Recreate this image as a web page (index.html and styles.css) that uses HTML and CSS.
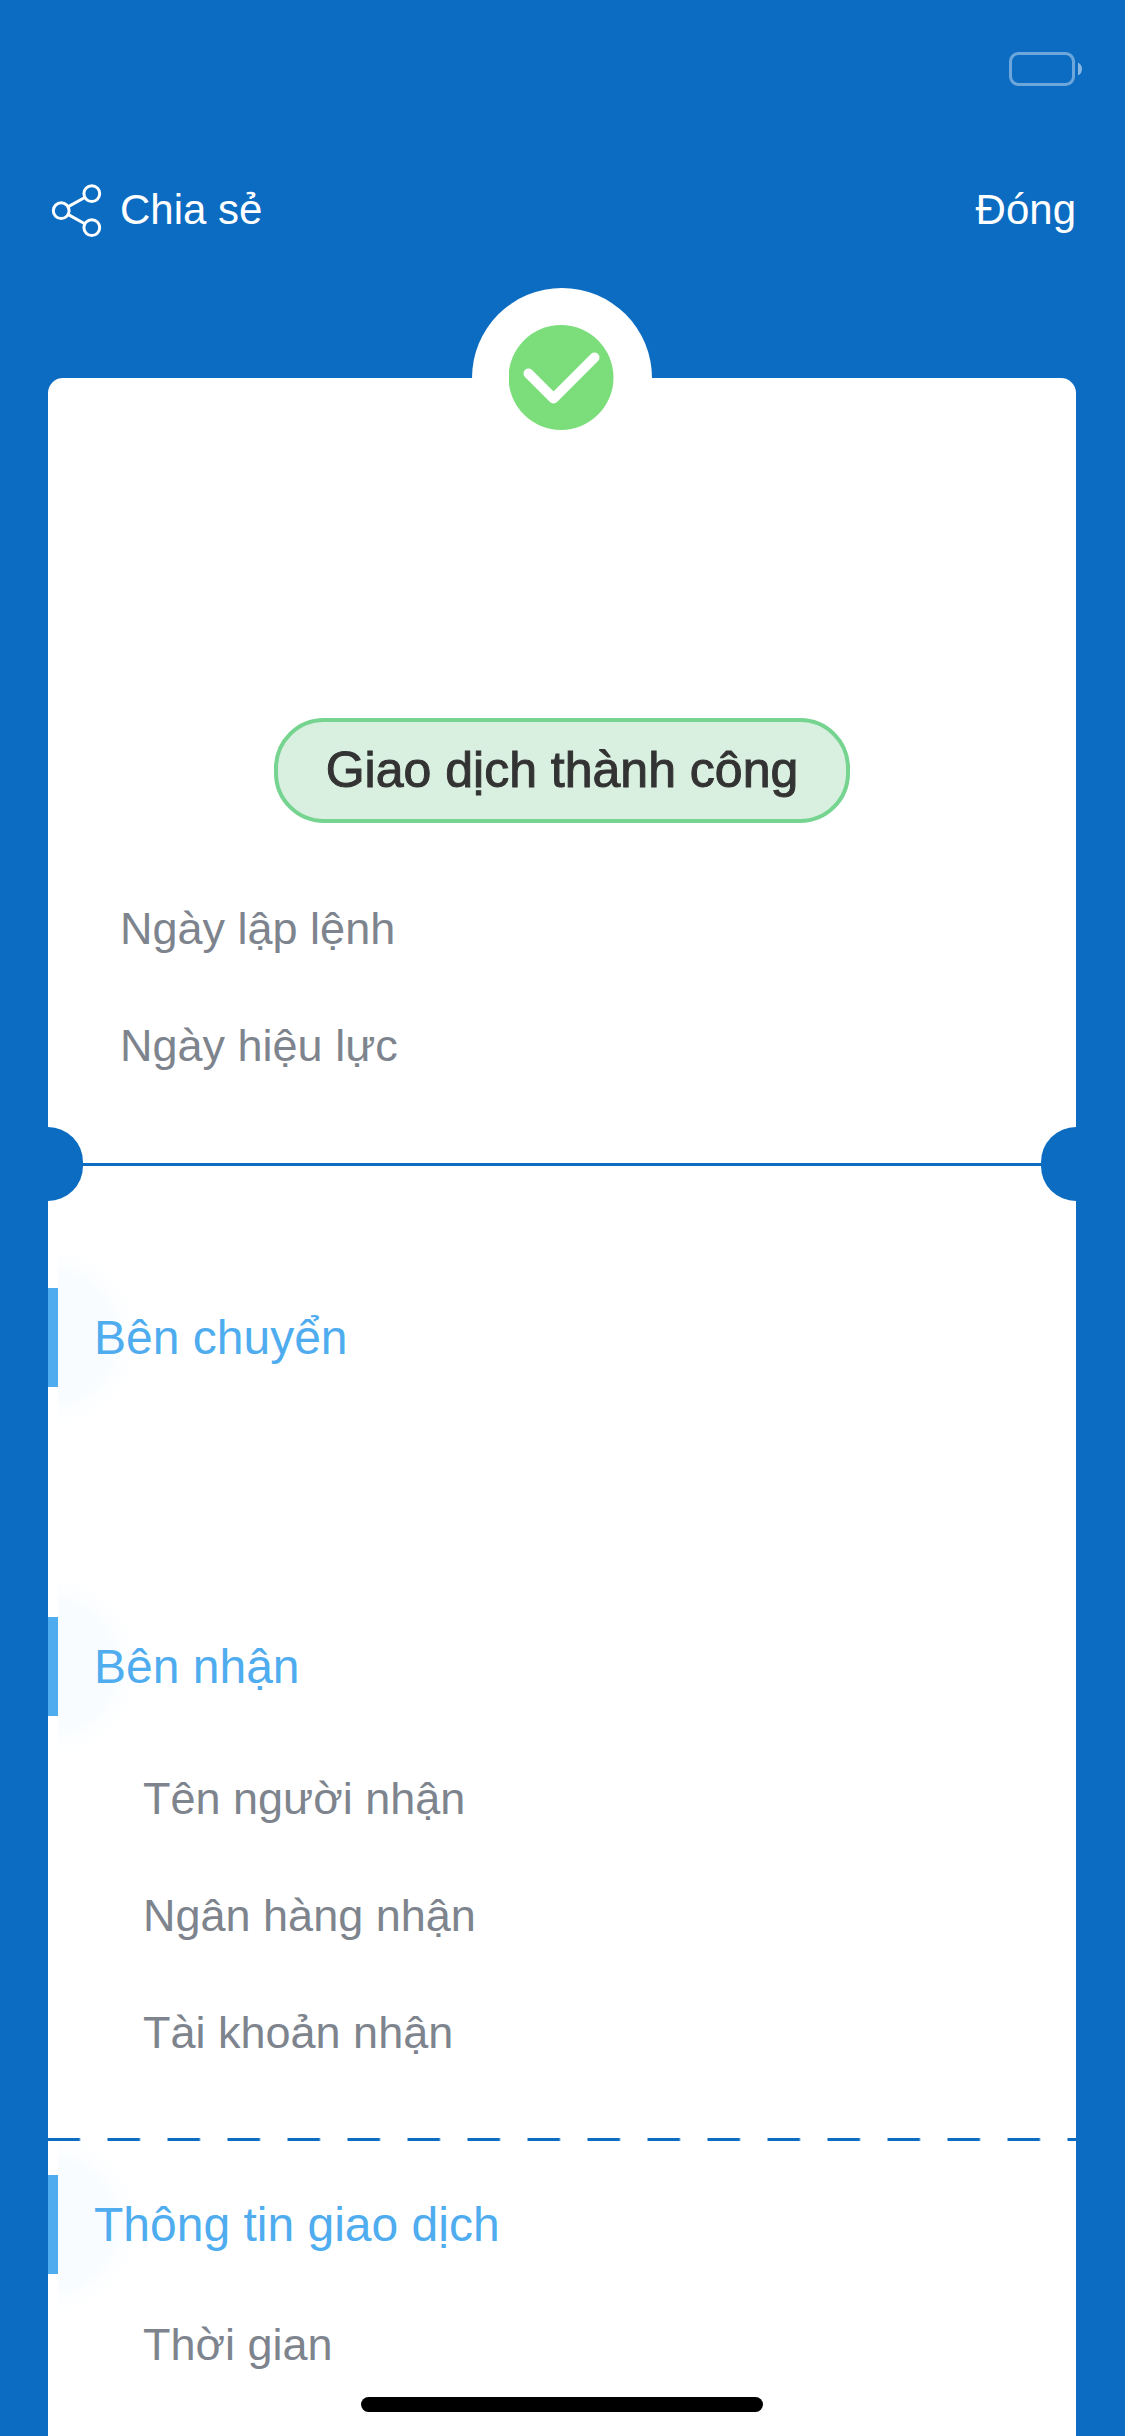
FILE: index.html
```html
<!DOCTYPE html>
<html lang="vi">
<head>
  <meta charset="utf-8">
  <meta name="viewport" content="width=device-width, initial-scale=1">
  <title>Giao dịch thành công</title>
  <link rel="stylesheet" href="styles.css">
</head>
<body>
  <div class="status-bar">
    <svg class="battery" width="74" height="34" viewBox="0 0 74 34" aria-hidden="true">
      <rect x="1.5" y="1.5" width="63" height="31" rx="8" fill="none" stroke="#fff" stroke-opacity=".4" stroke-width="3"/>
      <path d="M69 10.500Q73 12.500 73 17T69 23.500Z" fill="#fff" fill-opacity=".5"/>
    </svg>
  </div>

  <header class="top-bar">
    <button class="bar-button" type="button">
      <svg width="56" height="56" viewBox="0 0 56 56" fill="none" stroke="#fff" stroke-width="3" aria-hidden="true">
        <circle cx="13.200" cy="28.700" r="7.900"/>
        <circle cx="43.800" cy="11.600" r="7.900"/>
        <circle cx="43.800" cy="45.600" r="7.900"/>
        <path d="M20.300 24.600L36.800 15.500M20.300 32.600L36.800 41.700"/>
      </svg>
      Chia sẻ
    </button>
    <button class="bar-button" type="button">Đóng</button>
  </header>

  <main class="receipt">
    <div class="badge">
      <svg width="106" height="106" viewBox="0 0 106 106" aria-hidden="true">
        <circle cx="52" cy="52.500" r="52.500" fill="#7bde7b"/>
        <path d="M19.500 48.500L44.500 73.500L85.500 32.500" fill="none" stroke="#fff" stroke-width="10" stroke-linecap="round" stroke-linejoin="round"/>
      </svg>
    </div>

    <h1 class="result">Giao dịch thành công</h1>

    <ul class="rows">
      <li>Ngày lập lệnh</li>
      <li>Ngày hiệu lực</li>
    </ul>

    <div class="tear">
      <span class="notch notch-left"></span>
      <span class="tear-line"></span>
      <span class="notch notch-right"></span>
    </div>

    <section class="sender">
      <h2 class="section-title">Bên chuyển</h2>
    </section>

    <section class="receiver">
      <h2 class="section-title">Bên nhận</h2>
      <ul class="rows rows-nested">
        <li>Tên người nhận</li>
        <li>Ngân hàng nhận</li>
        <li>Tài khoản nhận</li>
      </ul>
    </section>

    <div class="dashes"></div>

    <section class="details">
      <h2 class="section-title">Thông tin giao dịch</h2>
      <ul class="rows rows-nested">
        <li>Thời gian</li>
      </ul>
    </section>
  </main>

  <div class="home-indicator"></div>
</body>
</html>
```
FILE: styles.css
```css
:root {
  --blue: #0c6cc2;
  --sky: #4eacef;
  --grey: #7e848d;
}

* {
  box-sizing: border-box;
}

body {
  display: flex;
  flex-direction: column;
  min-height: 100vh;
  margin: 0;
  background: var(--blue);
  font-family: "Liberation Sans", Arial, sans-serif;
}

h1,
h2,
ul {
  margin: 0;
  padding: 0;
  font-weight: 400;
  list-style: none;
}

.status-bar {
  display: flex;
  align-items: center;
  justify-content: flex-end;
  height: 138px;
  padding: 0 42px;
}

.top-bar {
  display: flex;
  align-items: center;
  justify-content: space-between;
  height: 144px;
  padding: 0 49px 0 48px;
}

.bar-button {
  display: flex;
  align-items: center;
  gap: 16px;
  padding: 0;
  border: 0;
  background: none;
  color: #fff;
  font: inherit;
  font-size: 42px;
  line-height: 56px;
}

.receipt {
  position: relative;
  display: flex;
  flex: 1;
  flex-direction: column;
  margin: 96px 49px 0 48px;
  padding: 340px 0 32px;
  border-radius: 15px 15px 0 0;
  background: #fff;
}

.badge {
  position: absolute;
  top: -90px;
  left: calc(50% - 90px);
  display: flex;
  align-items: center;
  justify-content: center;
  width: 180px;
  height: 180px;
  border-radius: 50%;
  background: #fff;
}

.result {
  align-self: center;
  padding: 0 48px;
  border: 4px solid #75d48f;
  border-radius: 50px;
  background: #d9efdf;
  color: #333;
  font-size: 50px;
  line-height: 97px;
  -webkit-text-stroke: 1px #333;
}

.rows {
  padding-left: 72px;
  color: var(--grey);
  font-size: 45px;
  line-height: 117px;
}

.rows-nested {
  padding-left: 95px;
}

.result + .rows {
  padding-top: 47px;
}

.tear {
  display: flex;
  align-items: center;
  margin: 23px 0 87px;
}

.notch {
  width: 35px;
  height: 74px;
  background: var(--blue);
}

.notch-left {
  border-radius: 0 37px 37px 0;
}

.notch-right {
  border-radius: 37px 0 0 37px;
}

.tear-line {
  flex: 1;
  height: 3px;
  background: var(--blue);
}

.receipt > section {
  position: relative;
  isolation: isolate;
}

.section-title {
  position: relative;
  padding-left: 36px;
  border-left: 10px solid var(--sky);
  color: var(--sky);
  font-size: 48px;
  line-height: 99px;
}

/* Soft halo behind the section marker */
.section-title::before {
  content: "";
  position: absolute;
  z-index: -1;
  top: -41px;
  left: 0;
  width: 81px;
  height: 180px;
  background: radial-gradient(circle 90px at -9px 50%, #f8fcff 0, #f8fcff 65%, transparent 100%);
}

.sender {
  padding-bottom: 230px;
}

.receiver {
  display: grid;
  gap: 24px;
  padding-bottom: 47px;
}

.dashes {
  position: relative;
  z-index: 1;
  height: 3px;
  margin-bottom: 34px;
  background: repeating-linear-gradient(90deg, var(--blue) 0, var(--blue) 31px, #fff 33px, #fff 59px, var(--blue) 60px);
}

.details {
  display: grid;
  gap: 12px;
}

.home-indicator {
  position: fixed;
  bottom: 24px;
  left: calc(50% - 202px);
  width: 402px;
  height: 15px;
  border-radius: 8px;
  background: #000;
}
```
